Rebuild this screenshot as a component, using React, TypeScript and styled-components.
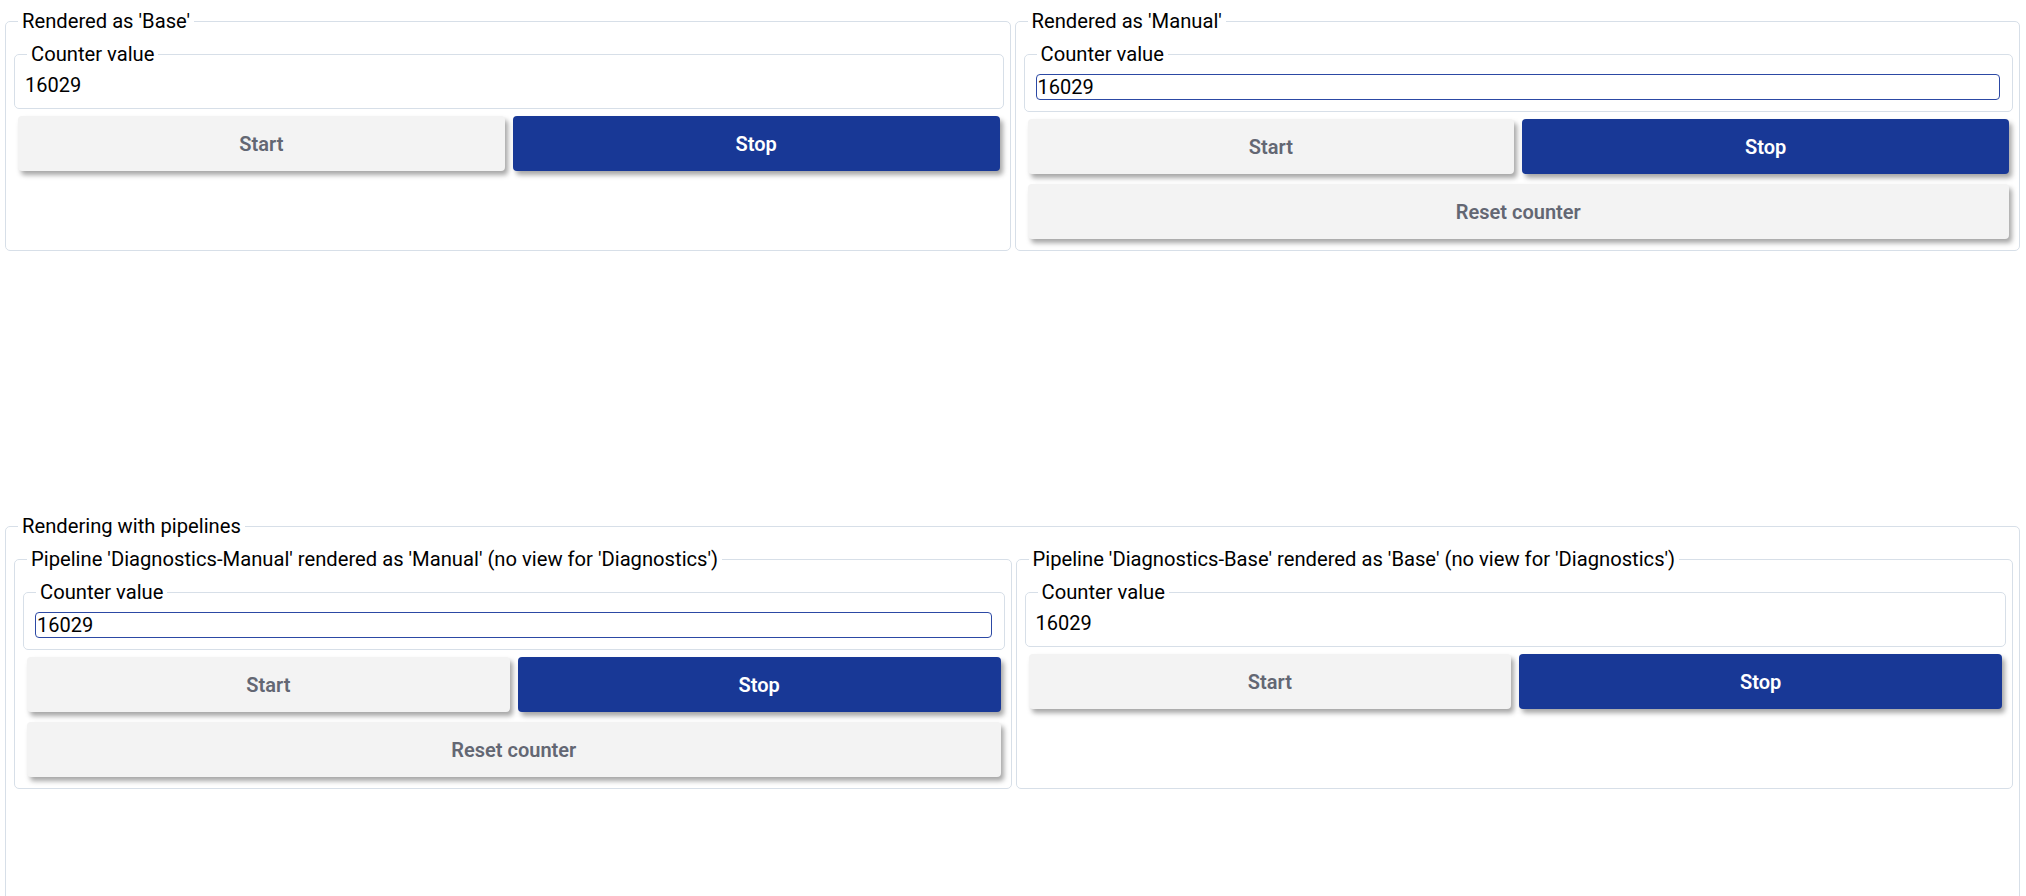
import React from "react";
import styled, { createGlobalStyle } from "styled-components";

const GlobalStyle = createGlobalStyle`
  html, body {
    margin: 0;
    padding: 0;
    background: #ffffff;
    overflow: hidden;
  }
  body {
    font-family: "Segoe UI", Roboto, "Noto Sans", sans-serif;
    font-size: 20px;
    color: #000;
  }
  * { box-sizing: border-box; }
`;

const Page = styled.div`
  height: 896px;
  overflow: hidden;
  padding: 8px 6px 0 5px;
  display: grid;
  grid-template-rows: 500px 1fr;
  row-gap: 5px;
`;

const Columns = styled.div<{ $align?: string }>`
  display: grid;
  grid-template-columns: 1fr 1fr;
  column-gap: 4px;
  align-items: stretch;
  align-self: ${(p) => p.$align ?? "stretch"};
`;

const Group = styled.fieldset<{ $fill?: boolean }>`
  margin: 0;
  min-width: 0;
  border: 1px solid #d7dfe8;
  border-radius: 5px;
  padding: 7px 6px 6px 8px;
  display: flex;
  flex-direction: column;
  height: ${(p) => (p.$fill ? "500px" : "auto")};
`;

const Legend = styled.legend`
  margin-left: 4px;
  padding: 0 4px;
  font-size: 20.2px;
  line-height: 26px;
  color: #000;
  white-space: nowrap;
`;

const CounterBox = styled.fieldset`
  margin: 0;
  min-width: 0;
  border: 1px solid #d7dfe8;
  border-radius: 5px;
  padding: 5px 9px 10px 8px;
`;

const ValueText = styled.div`
  height: 26px;
  line-height: 26px;
  padding-left: 2px;
  font-size: 20px;
  color: #000;
`;

const ValueInput = styled.input`
  display: block;
  width: calc(100% - 6px);
  height: 26px;
  margin: 2px 3px 1px;
  padding: 0 1px;
  font-family: "Segoe UI", Roboto, "Noto Sans", sans-serif;
  font-size: 20px;
  line-height: 24px;
  color: #000;
  background: #fff;
  border: 1px solid #2c49a4;
  border-radius: 4px;
  outline: none;
`;

const ButtonRow = styled.div<{ $first?: boolean }>`
  display: flex;
  margin-top: ${(p) => (p.$first ? "2px" : "0")};
`;

const Button = styled.button<{ $primary?: boolean }>`
  flex: 1 1 0;
  height: 55px;
  margin: 5px 4px;
  border: none;
  border-radius: 4px;
  font-family: "Segoe UI", Roboto, "Noto Sans", sans-serif;
  font-size: 20px;
  font-weight: 600;
  cursor: pointer;
  background: ${(p) => (p.$primary ? "#183896" : "#f3f3f3")};
  color: ${(p) => (p.$primary ? "#ffffff" : "#636773")};
  box-shadow: 3px 4px 5px rgba(0, 0, 0, 0.35);
`;

const Inner = styled.div`
  display: grid;
  grid-template-columns: 1fr 1fr;
  column-gap: 4px;
  align-items: stretch;
  align-self: stretch;
`;

type ViewProps = { title: string; manual?: boolean };

const CounterView: React.FC<ViewProps> = ({ title, manual }) => (
  <Group>
    <Legend>{title}</Legend>
    <CounterBox>
      <Legend>Counter value</Legend>
      {manual ? <ValueInput defaultValue="16029" /> : <ValueText>16029</ValueText>}
    </CounterBox>
    <ButtonRow $first>
      <Button>Start</Button>
      <Button $primary>Stop</Button>
    </ButtonRow>
    {manual && (
      <ButtonRow>
        <Button>Reset counter</Button>
      </ButtonRow>
    )}
  </Group>
);

export default function App() {
  return (
    <>
      <GlobalStyle />
      <Page>
        <Columns $align="start">
          <CounterView title="Rendered as 'Base'" />
          <CounterView title="Rendered as 'Manual'" manual />
        </Columns>
        <Group $fill>
          <Legend>Rendering with pipelines</Legend>
          <Inner>
            <CounterView
              title="Pipeline 'Diagnostics-Manual' rendered as 'Manual' (no view for 'Diagnostics')"
              manual
            />
            <CounterView
              title="Pipeline 'Diagnostics-Base' rendered as 'Base' (no view for 'Diagnostics')"
            />
          </Inner>
        </Group>
      </Page>
    </>
  );
}
